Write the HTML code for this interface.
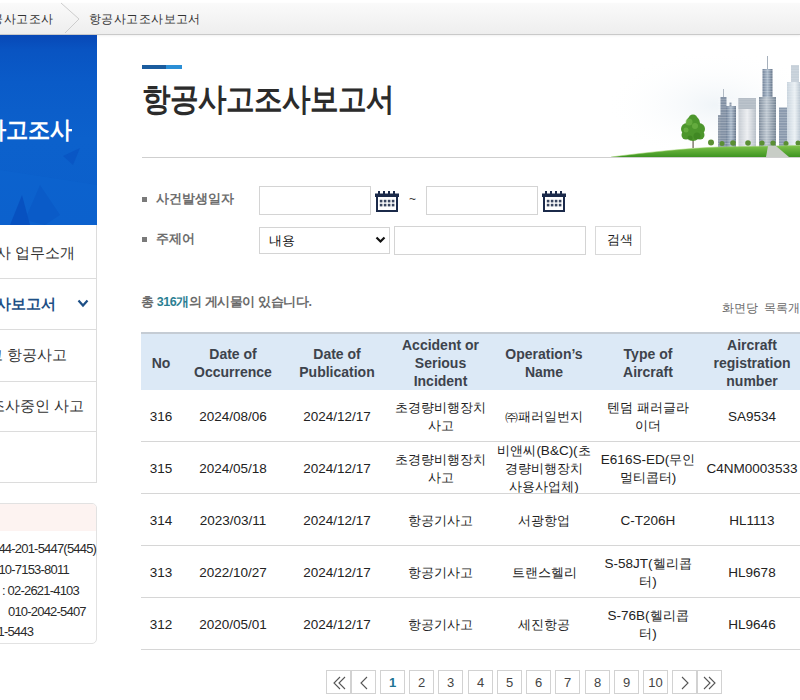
<!DOCTYPE html><html><head><meta charset="utf-8"><style>
*{box-sizing:border-box;margin:0;padding:0}
html,body{width:800px;height:700px;overflow:hidden;background:#fff}
body{font-family:"Liberation Sans",sans-serif;color:#333;position:relative}
.abs{position:absolute}
.t{position:absolute;white-space:nowrap;line-height:1}
.inp{position:absolute;border:1px solid #d4d4d4;background:#fff}
.menu{position:absolute;left:0;width:97px;border-right:1px solid #dcdcdc;border-bottom:1px solid #dcdcdc}
.cell{position:absolute;display:flex;align-items:center;justify-content:center;text-align:center;color:#333}
.th{font-size:14px;font-weight:bold;line-height:18px;color:#3d434c;padding-top:2px}
.l{font-size:13.5px}
.td{font-size:13px;line-height:18px;color:#222;padding-top:2px}
.pgb{position:absolute;top:670px;width:25px;height:24px;border:1px solid #d2d2d2;background:#fff;font-size:13px;color:#444;display:flex;align-items:center;justify-content:center}
.cur{color:#1e7494;font-weight:bold}
</style></head><body>
<div class="abs" style="left:0;top:3px;width:800px;height:32px;background:linear-gradient(#fafafa,#eeeeee);border-bottom:1px solid #c9c9c9;box-shadow:0 1px 2px rgba(0,0,0,0.06)"></div>
<div class="t" style="left:-21px;top:13px;font-size:12px;transform:scale(1.035);transform-origin:0 0;color:#333">항공사고조사</div>
<svg class="abs" style="left:0;top:0" width="100" height="35"><polyline points="61,3 79,19 65,33" fill="none" stroke="#cdcdcd" stroke-width="1"/></svg>
<div class="t" style="left:89px;top:13px;font-size:12px;transform:scale(1.035);transform-origin:0 0;color:#333">항공사고조사보고서</div>
<div class="abs" style="left:0;top:35px;width:97px;height:190px;overflow:hidden;background:linear-gradient(180deg,#0848b6 0%,#0954c2 8%,#0a5bc8 25%,#0c61cc 55%,#0b5fcb 100%)">
<svg width="97" height="190" style="position:absolute;left:0;top:0">
<polygon points="63,121 80,113 73,130" fill="#0850c0" opacity="0.6"/>
<polygon points="0,135 97,150 97,190 0,190" fill="#0e66d2" opacity="0.35"/>
<polygon points="10,190 22,160 30,190" fill="#0546b8" opacity="0.6"/>
<polygon points="40,150 60,180 45,190 25,185" fill="#0852c0" opacity="0.4"/>
</svg>
<div class="t" style="left:-60px;top:84px;font-size:22px;font-weight:bold;color:#fff;transform:scaleY(1.08);transform-origin:0 0">항공사고조사</div>
</div>
<div class="menu" style="top:225px;height:54px"></div>
<div class="t" style="left:-4px;top:245px;font-size:15px;color:#333">사 업무소개</div>
<div class="menu" style="top:279px;height:51px"></div>
<div class="t" style="left:-4px;top:296px;font-size:15px;font-weight:bold;color:#1d4f86">사보고서</div>
<svg class="abs" style="left:77px;top:299px" width="12" height="9"><polyline points="1.5,1.5 6,6.5 10.5,1.5" fill="none" stroke="#1d4f86" stroke-width="2.2"/></svg>
<div class="menu" style="top:330px;height:52px"></div>
<div class="t" style="left:-12px;top:347px;font-size:15px;color:#333">고 항공사고</div>
<div class="menu" style="top:382px;height:50px"></div>
<div class="t" style="left:-10px;top:398px;font-size:15px;color:#333">조사중인 사고</div>
<div class="menu" style="top:432px;height:51px"></div>
<div class="abs" style="left:-10px;top:503px;width:107px;height:141px;border:1px solid #e2e2e2;border-radius:5px;overflow:hidden"><div style="height:27px;background:#fdf3f1"></div></div>
<div class="t" style="left:-8px;top:542px;font-size:13px;color:#2a2a2a;letter-spacing:-0.8px">044-201-5447(5445)</div>
<div class="t" style="left:-8px;top:563px;font-size:13px;color:#2a2a2a;letter-spacing:-0.8px">010-7153-8011</div>
<div class="t" style="left:2px;top:584px;font-size:13px;color:#2a2a2a;letter-spacing:-0.8px">: 02-2621-4103</div>
<div class="t" style="left:8px;top:605px;font-size:13px;color:#2a2a2a;letter-spacing:-0.8px">010-2042-5407</div>
<div class="t" style="left:-8px;top:625px;font-size:13px;color:#2a2a2a;letter-spacing:-0.8px">11-5443</div>
<div class="abs" style="left:142px;top:65px;width:24px;height:4px;background:#1a5c9e"></div>
<div class="abs" style="left:166px;top:65px;width:16px;height:4px;background:#2b8fd6"></div>
<div class="t" style="left:142px;top:83px;font-size:28.3px;font-weight:bold;color:#2b2b2b;transform:scaleY(1.12);transform-origin:0 0">항공사고조사보고서</div>
<div class="abs" style="left:142px;top:157px;width:658px;height:1px;background:#cfcfcf"></div>
<svg class="abs" style="left:590px;top:45px" width="210" height="112" viewBox="590 45 210 112">
<defs>
<linearGradient id="gb" x1="0" x2="1"><stop offset="0" stop-color="#6f8097"/><stop offset="0.5" stop-color="#a9b9ca"/><stop offset="1" stop-color="#647489"/></linearGradient>
<linearGradient id="gw" x1="0" x2="1"><stop offset="0" stop-color="#c4cad1"/><stop offset="0.5" stop-color="#eceef1"/><stop offset="1" stop-color="#b6bec7"/></linearGradient>
<linearGradient id="gt" x1="0" x2="1"><stop offset="0" stop-color="#7c8a9a"/><stop offset="0.45" stop-color="#bcc6d0"/><stop offset="1" stop-color="#738292"/></linearGradient>
<linearGradient id="gl" x1="0" x2="1"><stop offset="0" stop-color="#c8d3dd"/><stop offset="0.6" stop-color="#eaf0f4"/><stop offset="1" stop-color="#bcc8d3"/></linearGradient>
<linearGradient id="gg" x1="0" y1="0" x2="0" y2="1"><stop offset="0" stop-color="#7fc24a"/><stop offset="1" stop-color="#3d9421"/></linearGradient>
<radialGradient id="sky" cx="0.5" cy="0.5" r="0.5"><stop offset="0" stop-color="#e9f0f5" stop-opacity="1"/><stop offset="1" stop-color="#ffffff" stop-opacity="0"/></radialGradient>
<pattern id="win" width="4" height="2.6" patternUnits="userSpaceOnUse"><rect width="4" height="1" fill="#ffffff" opacity="0.28"/></pattern>
</defs>
<ellipse cx="715" cy="105" rx="110" ry="55" fill="url(#sky)" opacity="0.7"/>
<!-- B1 -->
<rect x="718" y="115" width="4" height="32" fill="#8a96a6"/>
<rect x="720.5" y="97" width="6" height="50" fill="#7f8ea2"/>
<line x1="723.5" y1="89" x2="723.5" y2="97" stroke="#a0aab6" stroke-width="0.8"/>
<rect x="726" y="106" width="10" height="41" fill="url(#gb)"/>
<rect x="729.5" y="102.5" width="2" height="4" fill="#8a98aa"/>
<rect x="718" y="97" width="18" height="50" fill="url(#win)"/>
<!-- B2 -->
<rect x="738.5" y="98" width="17.5" height="49" fill="url(#gw)"/>
<rect x="738.5" y="98" width="17.5" height="11" fill="#b3bcc5"/>
<rect x="738.5" y="98" width="17.5" height="49" fill="url(#win)" opacity="0.5"/>
<!-- B3 -->
<rect x="759" y="97" width="17" height="50" fill="url(#gt)"/>
<rect x="762.5" y="69" width="10" height="28" fill="url(#gb)"/>
<line x1="767.5" y1="56" x2="767.5" y2="69" stroke="#a6b0bc" stroke-width="1"/>
<rect x="759" y="69" width="17" height="78" fill="url(#win)"/>
<!-- B4 -->
<rect x="779" y="107.5" width="8" height="40" fill="#8797ab"/>
<rect x="779" y="107.5" width="8" height="40" fill="url(#win)"/>
<!-- B5 -->
<rect x="787" y="82" width="13" height="65" fill="url(#gl)"/>
<rect x="791" y="65" width="8" height="17" fill="#c5cfd8"/>
<rect x="787" y="65" width="13" height="82" fill="url(#win)" opacity="0.6"/>
<!-- bushes -->
<g fill="#5b8f34">
<circle cx="711" cy="142.5" r="3"/><circle cx="722" cy="143.5" r="2.5"/><circle cx="733" cy="143" r="2.8"/><circle cx="748" cy="143" r="2.8"/><circle cx="762" cy="143" r="2.6"/><circle cx="773" cy="143" r="2.6"/><circle cx="786" cy="143.5" r="2.5"/><circle cx="798" cy="143" r="2.5"/>
</g>
<!-- tree -->
<rect x="692.4" y="136" width="1.4" height="12" fill="#7a7566"/>
<g fill="#4c962c">
<circle cx="693" cy="123" r="7"/><circle cx="687" cy="129" r="6"/><circle cx="699" cy="129" r="6"/><circle cx="693" cy="134" r="7"/><circle cx="686" cy="135" r="4.5"/><circle cx="700" cy="135" r="4.5"/><circle cx="693" cy="119" r="4.5"/>
</g>
<g fill="#79bd4e" opacity="0.55"><circle cx="689" cy="122" r="3.5"/><circle cx="695" cy="126" r="3"/><circle cx="686" cy="130" r="2.5"/></g>
<g fill="#2f7418" opacity="0.4"><circle cx="697" cy="136" r="3.5"/><circle cx="690" cy="138" r="2.5"/></g>
<!-- grass hill -->
<path d="M611,157 C650,152 690,148 720,147 L800,145.5 L800,157 Z" fill="url(#gg)"/><path d="M611,157 C650,152 690,148 720,147 L800,145.5" fill="none" stroke="#9ad06a" stroke-width="0.8" opacity="0.7"/>
<path d="M766,157 L789,157 L776,146 L768,146 Z" fill="#c8cdc6"/>
</svg>

<div class="abs" style="left:142px;top:197px;width:5px;height:5px;background:#7a7a7a"></div>
<div class="t" style="left:156px;top:192px;font-size:13px;font-weight:600;color:#6e6e6e">사건발생일자</div>
<div class="inp" style="left:259px;top:186px;width:112px;height:29px"></div>
<svg class="abs" style="left:375px;top:191px" width="24" height="21" viewBox="0 0 24 21">
<rect x="0" y="2.5" width="24" height="3.5" fill="#1b2a4a"/>
<rect x="3" y="0" width="2" height="3" fill="#1b2a4a"/><rect x="8" y="0" width="2" height="3" fill="#1b2a4a"/><rect x="13" y="0" width="2" height="3" fill="#1b2a4a"/><rect x="18" y="0" width="2" height="3" fill="#1b2a4a"/>
<rect x="2" y="5" width="20" height="15" fill="none" stroke="#1b2a4a" stroke-width="2"/>
<g fill="#3a4660"><rect x="4.8" y="8.8" width="2.6" height="2.6"/><rect x="8.8" y="8.8" width="2.6" height="2.6"/><rect x="12.8" y="8.8" width="2.6" height="2.6"/><rect x="16.8" y="8.8" width="2.6" height="2.6"/>
<rect x="4.8" y="12.8" width="2.6" height="2.6"/><rect x="8.8" y="12.8" width="2.6" height="2.6"/><rect x="12.8" y="12.8" width="2.6" height="2.6"/><rect x="16.8" y="12.8" width="2.6" height="2.6"/></g>
</svg>
<div class="t" style="left:409px;top:193px;font-size:12px;color:#333">~</div>
<div class="inp" style="left:426px;top:186px;width:112px;height:29px"></div>
<svg class="abs" style="left:542px;top:191px" width="24" height="21" viewBox="0 0 24 21">
<rect x="0" y="2.5" width="24" height="3.5" fill="#1b2a4a"/>
<rect x="3" y="0" width="2" height="3" fill="#1b2a4a"/><rect x="8" y="0" width="2" height="3" fill="#1b2a4a"/><rect x="13" y="0" width="2" height="3" fill="#1b2a4a"/><rect x="18" y="0" width="2" height="3" fill="#1b2a4a"/>
<rect x="2" y="5" width="20" height="15" fill="none" stroke="#1b2a4a" stroke-width="2"/>
<g fill="#3a4660"><rect x="4.8" y="8.8" width="2.6" height="2.6"/><rect x="8.8" y="8.8" width="2.6" height="2.6"/><rect x="12.8" y="8.8" width="2.6" height="2.6"/><rect x="16.8" y="8.8" width="2.6" height="2.6"/>
<rect x="4.8" y="12.8" width="2.6" height="2.6"/><rect x="8.8" y="12.8" width="2.6" height="2.6"/><rect x="12.8" y="12.8" width="2.6" height="2.6"/><rect x="16.8" y="12.8" width="2.6" height="2.6"/></g>
</svg>
<div class="abs" style="left:142px;top:237px;width:5px;height:5px;background:#7a7a7a"></div>
<div class="t" style="left:156px;top:232px;font-size:13px;font-weight:600;color:#6e6e6e">주제어</div>
<div class="inp" style="left:259px;top:227px;width:131px;height:27px"></div>
<div class="t" style="left:269px;top:234px;font-size:13px;color:#111">내용</div>
<svg class="abs" style="left:375px;top:236px" width="11" height="8"><polyline points="1.5,1.5 5.5,5.5 9.5,1.5" fill="none" stroke="#111" stroke-width="2.2"/></svg>
<div class="inp" style="left:394px;top:226px;width:192px;height:29px"></div>
<div class="inp" style="left:595px;top:226px;width:46px;height:29px;border-color:#d9d9d9"></div>
<div class="t" style="left:607px;top:233px;font-size:13px;color:#222">검색</div>
<div class="t" style="left:141px;top:296px;font-size:12.5px;font-weight:bold;letter-spacing:-0.4px;color:#6a6a6a">총 <span style="color:#2b7f93">316개</span>의 게시물이 있습니다.</div>
<div class="t" style="left:722px;top:302px;font-size:12px;word-spacing:3px;color:#6a6a6a">화면당 목록개수</div>
<div class="abs" style="left:141px;top:332px;width:659px;height:2px;background:#c5ccd4"></div>
<div class="abs" style="left:141px;top:334px;width:659px;height:56px;background:#dce9f6"></div>
<div class="cell th" style="left:141px;top:334px;width:40px;height:56px">No</div>
<div class="cell th" style="left:181px;top:334px;width:104px;height:56px">Date of<br>Occurrence</div>
<div class="cell th" style="left:285px;top:334px;width:104px;height:56px">Date of<br>Publication</div>
<div class="cell th" style="left:389px;top:334px;width:103px;height:56px">Accident or<br>Serious<br>Incident</div>
<div class="cell th" style="left:492px;top:334px;width:104px;height:56px">Operation’s<br>Name</div>
<div class="cell th" style="left:596px;top:334px;width:104px;height:56px">Type of<br>Aircraft</div>
<div class="cell th" style="left:700px;top:334px;width:104px;height:56px">Aircraft<br>registration<br>number</div>
<div class="cell td" style="left:141px;top:390px;width:40px;height:51px"><div><span class="l">316</span></div></div>
<div class="cell td" style="left:181px;top:390px;width:104px;height:51px"><div><span class="l">2024/08/06</span></div></div>
<div class="cell td" style="left:285px;top:390px;width:104px;height:51px"><div><span class="l">2024/12/17</span></div></div>
<div class="cell td" style="left:389px;top:390px;width:103px;height:51px"><div>초경량비행장치<br>사고</div></div>
<div class="cell td" style="left:492px;top:390px;width:104px;height:51px"><div>㈜패러일번지</div></div>
<div class="cell td" style="left:596px;top:390px;width:104px;height:51px"><div>텐덤 패러글라<br>이더</div></div>
<div class="cell td" style="left:700px;top:390px;width:104px;height:51px"><div><span class="l">SA9534</span></div></div>
<div class="abs" style="left:141px;top:441px;width:659px;height:1px;background:#d6d6d6"></div>
<div class="cell td" style="left:141px;top:442px;width:40px;height:51px"><div><span class="l">315</span></div></div>
<div class="cell td" style="left:181px;top:442px;width:104px;height:51px"><div><span class="l">2024/05/18</span></div></div>
<div class="cell td" style="left:285px;top:442px;width:104px;height:51px"><div><span class="l">2024/12/17</span></div></div>
<div class="cell td" style="left:389px;top:442px;width:103px;height:51px"><div>초경량비행장치<br>사고</div></div>
<div class="cell td" style="left:492px;top:442px;width:104px;height:51px"><div>비앤씨<span class="l">(B&amp;C)(</span>초<br>경량비행장치<br>사용사업체<span class="l">)</span></div></div>
<div class="cell td" style="left:596px;top:442px;width:104px;height:51px"><div><span class="l">E616S-ED(</span>무인<br>멀티콥터<span class="l">)</span></div></div>
<div class="cell td" style="left:700px;top:442px;width:104px;height:51px"><div><span class="l">C4NM0003533</span></div></div>
<div class="abs" style="left:141px;top:493px;width:659px;height:1px;background:#d6d6d6"></div>
<div class="cell td" style="left:141px;top:494px;width:40px;height:51px"><div><span class="l">314</span></div></div>
<div class="cell td" style="left:181px;top:494px;width:104px;height:51px"><div><span class="l">2023/03/11</span></div></div>
<div class="cell td" style="left:285px;top:494px;width:104px;height:51px"><div><span class="l">2024/12/17</span></div></div>
<div class="cell td" style="left:389px;top:494px;width:103px;height:51px"><div>항공기사고</div></div>
<div class="cell td" style="left:492px;top:494px;width:104px;height:51px"><div>서광항업</div></div>
<div class="cell td" style="left:596px;top:494px;width:104px;height:51px"><div><span class="l">C-T206H</span></div></div>
<div class="cell td" style="left:700px;top:494px;width:104px;height:51px"><div><span class="l">HL1113</span></div></div>
<div class="abs" style="left:141px;top:545px;width:659px;height:1px;background:#d6d6d6"></div>
<div class="cell td" style="left:141px;top:546px;width:40px;height:51px"><div><span class="l">313</span></div></div>
<div class="cell td" style="left:181px;top:546px;width:104px;height:51px"><div><span class="l">2022/10/27</span></div></div>
<div class="cell td" style="left:285px;top:546px;width:104px;height:51px"><div><span class="l">2024/12/17</span></div></div>
<div class="cell td" style="left:389px;top:546px;width:103px;height:51px"><div>항공기사고</div></div>
<div class="cell td" style="left:492px;top:546px;width:104px;height:51px"><div>트랜스헬리</div></div>
<div class="cell td" style="left:596px;top:546px;width:104px;height:51px"><div><span class="l">S-58JT(</span>헬리콥<br>터<span class="l">)</span></div></div>
<div class="cell td" style="left:700px;top:546px;width:104px;height:51px"><div><span class="l">HL9678</span></div></div>
<div class="abs" style="left:141px;top:597px;width:659px;height:1px;background:#d6d6d6"></div>
<div class="cell td" style="left:141px;top:598px;width:40px;height:51px"><div><span class="l">312</span></div></div>
<div class="cell td" style="left:181px;top:598px;width:104px;height:51px"><div><span class="l">2020/05/01</span></div></div>
<div class="cell td" style="left:285px;top:598px;width:104px;height:51px"><div><span class="l">2024/12/17</span></div></div>
<div class="cell td" style="left:389px;top:598px;width:103px;height:51px"><div>항공기사고</div></div>
<div class="cell td" style="left:492px;top:598px;width:104px;height:51px"><div>세진항공</div></div>
<div class="cell td" style="left:596px;top:598px;width:104px;height:51px"><div><span class="l">S-76B(</span>헬리콥<br>터<span class="l">)</span></div></div>
<div class="cell td" style="left:700px;top:598px;width:104px;height:51px"><div><span class="l">HL9646</span></div></div>
<div class="abs" style="left:141px;top:649px;width:659px;height:1px;background:#d6d6d6"></div>
<div class="pgb" style="left:326px"><svg width="23" height="22" style="position:absolute;left:0;top:0"><polyline points="13,6 7,12 13,18" fill="none" stroke="#555" stroke-width="1.1"/><polyline points="18,6 12,12 18,18" fill="none" stroke="#555" stroke-width="1.1"/></svg></div>
<div class="pgb" style="left:351px"><svg width="23" height="22" style="position:absolute;left:0;top:0"><polyline points="15,6 9,12 15,18" fill="none" stroke="#555" stroke-width="1.1"/></svg></div>
<div class="pgb cur" style="left:380px">1</div>
<div class="pgb" style="left:409px">2</div>
<div class="pgb" style="left:438px">3</div>
<div class="pgb" style="left:468px">4</div>
<div class="pgb" style="left:497px">5</div>
<div class="pgb" style="left:526px">6</div>
<div class="pgb" style="left:555px">7</div>
<div class="pgb" style="left:585px">8</div>
<div class="pgb" style="left:614px">9</div>
<div class="pgb" style="left:643px">10</div>
<div class="pgb" style="left:672px"><svg width="23" height="22" style="position:absolute;left:0;top:0"><polyline points="9,6 15,12 9,18" fill="none" stroke="#555" stroke-width="1.1"/></svg></div>
<div class="pgb" style="left:697px"><svg width="23" height="22" style="position:absolute;left:0;top:0"><polyline points="6,6 12,12 6,18" fill="none" stroke="#555" stroke-width="1.1"/><polyline points="11,6 17,12 11,18" fill="none" stroke="#555" stroke-width="1.1"/></svg></div>
</body></html>
